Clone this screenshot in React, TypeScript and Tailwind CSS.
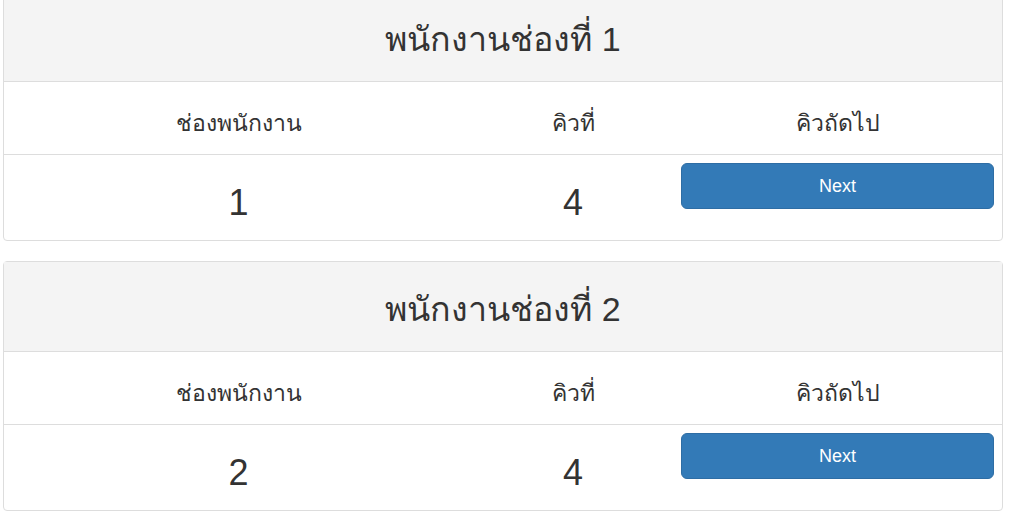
const counters = [
  { id: 1, queue: 4 },
  { id: 2, queue: 4 },
];

function CounterPanel({ id, queue }: { id: number; queue: number }) {
  return (
    <div className="mb-5 rounded border border-[#dddddd] bg-white">
      <div className="flex h-[90px] items-start justify-center border-b border-[#dddddd] bg-[#f4f4f4] pt-[29px]">
        <h2 className="text-[34px] leading-[36px]">พนักงานช่องที่ {id}</h2>
      </div>
      <div className="grid h-[73px] grid-cols-[469px_200px_1fr] border-b border-[#dddddd] text-[23px] leading-[26px]">
        <div className="pt-[28px] text-center">ช่องพนักงาน</div>
        <div className="pt-[28px] text-center">คิวที่</div>
        <div className="pt-[28px] text-center">คิวถัดไป</div>
      </div>
      <div className="grid h-[85px] grid-cols-[469px_200px_1fr] text-[36px] leading-[40px]">
        <div className="pt-[28px] text-center">{id}</div>
        <div className="pt-[28px] text-center">{queue}</div>
        <div className="px-2 pt-2">
          <button className="block h-[46px] w-full rounded-md border border-[#2e6da4] bg-[#337ab7] text-[18px] leading-6 text-white">
            Next
          </button>
        </div>
      </div>
    </div>
  );
}

export default function App() {
  return (
    <div className="mt-[-9px] w-[1003px] pl-[3px] font-['Liberation_Sans',sans-serif] text-[#333333]">
      {counters.map((c) => (
        <CounterPanel key={c.id} id={c.id} queue={c.queue} />
      ))}
    </div>
  );
}
